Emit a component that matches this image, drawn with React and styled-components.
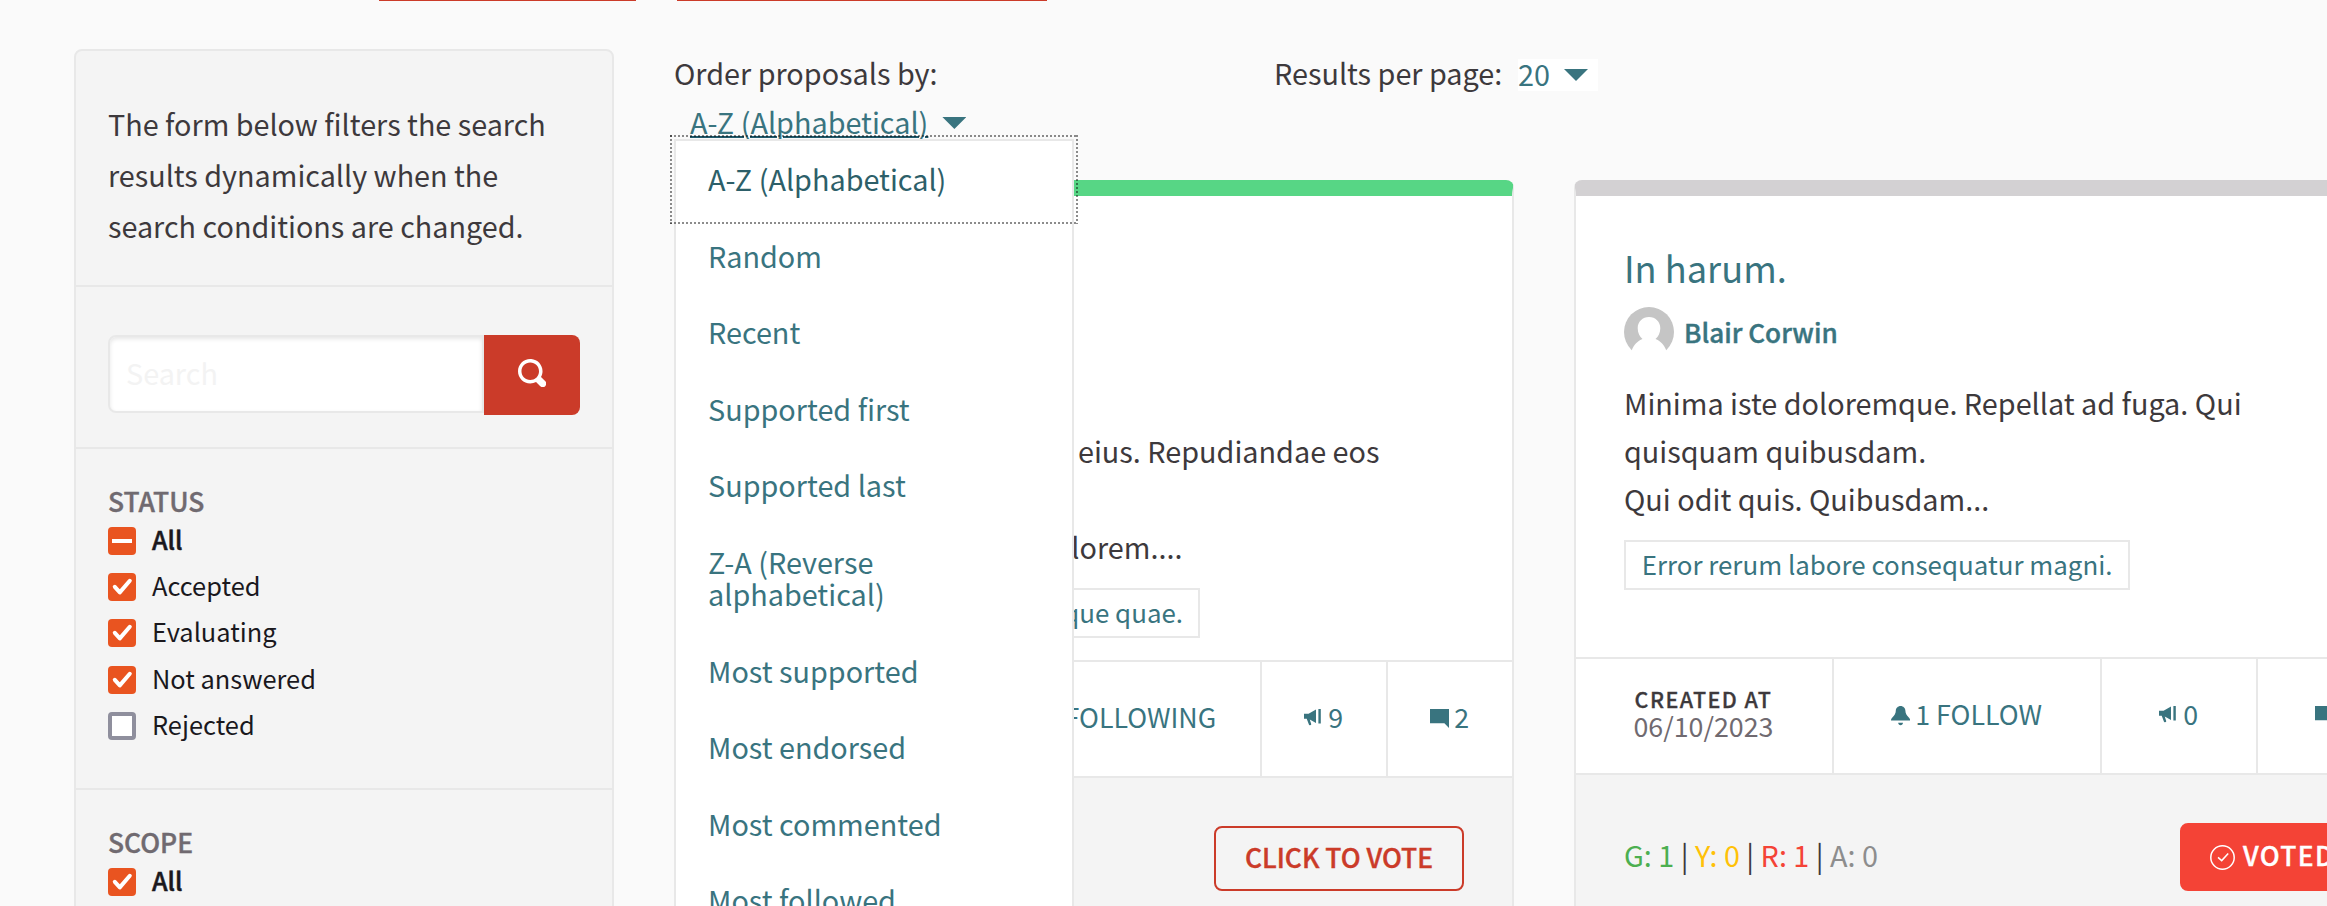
import React from 'react';
import styled, { createGlobalStyle } from 'styled-components';

const teal = '#39747f';
const line = '#e8e8e8';
const ink = '#3d393c';
const muted = '#706a70';
const red = '#cb3b29';
const orange = '#e95420';

const GlobalStyle = createGlobalStyle`
  *, *::before, *::after { box-sizing: border-box; }
  body {
    margin: 0;
    background: #fafafa;
    color: ${ink};
    font-family: "Noto Sans CJK JP", "Noto Sans", sans-serif;
    font-size: 28.8px;
    overflow: hidden;
  }
`;

const Page = styled.div`
  height: 906px;
  overflow: hidden;
`;

const TopActions = styled.div`
  display: flex;
  gap: 41px;
  height: 1px;
  padding-left: 379px;
`;

const TopActionEdge = styled.div`
  width: ${(p) => p.$width}px;
  background: ${red};
`;

const Columns = styled.main`
  display: grid;
  grid-template-columns: 540px 1740px;
  gap: 60px;
  padding: 48px 0 0 74px;
`;

/* ---------- filters ---------- */

const Sidebar = styled.aside`
  height: 900px;
  border: 2px solid ${line};
  border-radius: 8px;
  background: #f4f4f4;
`;

const FilterSection = styled.section`
  height: ${(p) => p.$height}px;
  padding: ${(p) => p.$top}px 32px 0;
  border-bottom: 2px solid ${line};
`;

const Intro = styled.p`
  margin: 0;
  font-size: 28.75px;
  line-height: 51.2px;
`;

const SearchForm = styled.div`
  display: flex;
  align-items: flex-start;
`;

const SearchInput = styled.input`
  width: 376px;
  height: 78px;
  padding: 0 16px 4px;
  border: 2px solid ${line};
  border-radius: 8px 0 0 8px;
  background: #fff;
  box-shadow: inset 0 2px 4px rgba(10, 10, 10, 0.1);
  color: ${ink};
  font: inherit;
  &::placeholder { color: #f3f3f3; opacity: 1; }
`;

const SearchButton = styled.button`
  display: flex;
  align-items: center;
  justify-content: center;
  width: 96px;
  height: 80px;
  padding: 0 0 4px;
  border: 0;
  border-radius: 0 8px 8px 0;
  background: ${red};
`;

const FilterTitle = styled.h3`
  margin: 0;
  color: ${muted};
  font-size: 26.4px;
  font-weight: 500;
  line-height: 34px;
  -webkit-text-stroke: 0.4px currentColor;
`;

const Option = styled.label`
  display: flex;
  align-items: center;
  gap: 16px;
  height: 46.2px;
  color: #1a181d;
  font-size: ${(p) => (p.$strong ? 25.1 : 25.4)}px;
  font-weight: ${(p) => (p.$strong ? 500 : 400)};
  -webkit-text-stroke: ${(p) => (p.$strong ? 0.5 : 0)}px currentColor;
`;

const OptionText = styled.span`
  line-height: 30px;
  padding-bottom: 4px;
`;

const Box = styled.span`
  display: flex;
  width: 28px;
  height: 28px;
  border: ${(p) => (p.$on ? '0' : '4px solid #8f8f9d')};
  border-radius: 4px;
  background: ${(p) => (p.$on ? orange : '#fff')};
`;

function Check({ state, strong, children }) {
  return (
    <Option $strong={strong}>
      <Box $on={state !== 'off'}>
        {state !== 'off' && (
          <svg width="28" height="28" viewBox="0 0 28 28" fill="none" stroke="#fff" strokeWidth="4">
            {state === 'mixed'
              ? <path d="M4 14h20" />
              : <path d="M6.8 13.8l5 5.6L21.8 7.8" strokeLinecap="round" strokeLinejoin="round" />}
          </svg>
        )}
      </Box>
      <OptionText>{children}</OptionText>
    </Option>
  );
}

/* ---------- controls ---------- */

const Controls = styled.div`
  display: grid;
  grid-template-columns: 600px 1fr;
  height: 131px;
  line-height: 48px;
`;

const OrderLine = styled.div`
  position: relative;
  display: flex;
  align-items: flex-start;
  padding-left: 16px;
`;

const OrderLink = styled.a`
  padding-top: 1px;
  color: ${teal};
  text-decoration: underline 2px #20596a;
  text-underline-offset: 2px;
`;

const Caret = styled.span`
  width: 24px;
  height: 12px;
  margin: ${(p) => p.$margin};
  background: ${teal};
  clip-path: polygon(0 0, 100% 0, 50% 100%);
`;

const PerPage = styled.div`
  display: flex;
  align-items: flex-start;
`;

const PerPageLabel = styled.span`
  width: 244px;
  white-space: nowrap;
`;

const PerPageValue = styled.span`
  display: flex;
  width: 80px;
  height: 32px;
  margin-top: 10px;
  background: #fff;
  color: ${teal};
  line-height: 30px;
`;

const Menu = styled.ul`
  position: absolute;
  z-index: 2;
  top: 42px;
  left: 0;
  width: 400px;
  margin: 0;
  padding: 0;
  border: 2px solid ${line};
  background: #fff;
  list-style: none;
`;

const MenuItem = styled.li`
  position: relative;
  padding: 22px 32px 22.6px;
  color: ${(p) => (p.$focused ? '#2d5f69' : teal)};
  line-height: 32px;
  white-space: pre-line;
`;

const dots = 'rgba(0, 0, 0, 0.45) 0 2px, transparent 2px 4px';
const FocusRing = styled.span`
  position: absolute;
  inset: -6px;
  background:
    repeating-linear-gradient(90deg, ${dots}) 0 0 / 100% 2px no-repeat,
    repeating-linear-gradient(90deg, ${dots}) 0 100% / 100% 2px no-repeat,
    repeating-linear-gradient(180deg, ${dots}) 0 0 / 2px 100% no-repeat,
    repeating-linear-gradient(180deg, ${dots}) 100% 0 / 2px 100% no-repeat;
`;

/* ---------- cards ---------- */

const Cards = styled.div`
  display: grid;
  grid-template-columns: 840px 840px;
  gap: 60px;
`;

const Card = styled.article`
  height: 900px;
  border: 2px solid ${line};
  border-top: 16px solid ${(p) => p.$accent};
  border-radius: 8px;
  background: #f4f4f4;
`;

const CardBody = styled.div`
  height: ${(p) => p.$height}px;
  padding: 47px 48px 0;
  background: #fff;
`;

const CardTitle = styled.h2`
  height: 48px;
  margin: 0;
  color: ${teal};
  font-size: 36.2px;
  font-weight: 400;
  line-height: 48px;
`;

const Author = styled.div`
  display: flex;
  gap: 10px;
  height: 50px;
  margin-top: 16px;
  color: ${teal};
  font-size: 26.1px;
  font-weight: 500;
  line-height: 50px;
  -webkit-text-stroke: 0.4px currentColor;
`;

const Description = styled.div`
  margin-top: 22px;
  line-height: 48px;
`;

const TextLine = styled.div`
  height: 48px;
  padding-left: ${(p) => p.$indent || 0}px;
  white-space: nowrap;
`;

const Tag = styled.span`
  display: inline-block;
  width: ${(p) => p.$width}px;
  height: 50px;
  margin-top: 17px;
  padding: 0 15px 0 14px;
  border: 2px solid ${line};
  color: ${teal};
  font-size: 25.9px;
  line-height: 44px;
  text-align: right;
  white-space: nowrap;
`;

const Stats = styled.div`
  display: grid;
  grid-template-columns: ${(p) => p.$columns};
  height: 118px;
  border: solid ${line};
  border-width: 2px 0;
  background: #fff;
`;

const Stat = styled.div`
  display: flex;
  flex-direction: ${(p) => (p.$stacked ? 'column' : 'row')};
  align-items: center;
  justify-content: center;
  gap: ${(p) => (p.$stacked ? 0 : 5)}px;
  padding: 0 1px 5px 0;
  color: ${(p) => (p.$stacked ? muted : teal)};
  font-size: 26.8px;
  line-height: 29px;
  white-space: nowrap;
  &:not(:last-child) { border-right: 2px solid ${line}; }
`;

const StatLabel = styled.span`
  color: ${ink};
  font-size: 21.5px;
  font-weight: 500;
  letter-spacing: 1.4px;
  line-height: 24px;
  -webkit-text-stroke: 0.3px currentColor;
`;

const StatIcon = styled.svg`
  width: 19.2px;
  height: 19.2px;
  margin-top: 5px;
  fill: currentColor;
`;

const VoteBar = styled.div`
  display: flex;
  align-items: center;
  justify-content: space-between;
  padding: 48px 48px 0;
`;

const Tally = styled.div`
  line-height: 30px;
  padding-bottom: 4px;
  white-space: pre;
`;

const Count = styled.span`
  color: ${(p) => p.$color};
`;

const VoteButton = styled.button`
  display: flex;
  align-items: center;
  justify-content: center;
  width: 250px;
  height: 65px;
  margin-left: auto;
  padding: 0 0 4px;
  border: 2px solid ${red};
  border-radius: 8px;
  background: transparent;
  color: ${red};
  font-family: inherit;
  font-size: 26.4px;
  font-weight: 500;
  white-space: nowrap;
  -webkit-text-stroke: 0.4px currentColor;
`;

const VotedButton = styled(VoteButton)`
  justify-content: flex-start;
  gap: 8px;
  width: 184px;
  height: 68px;
  padding: 0 0 0 28px;
  border-color: #f44336;
  background: #f44336;
  color: #fff;
  letter-spacing: 1.4px;
`;

const VotedText = styled.span`
  padding-bottom: 5px;
`;

const icons = {
  bell: 'M4 0c-1.1 0-2 .9-2 2 0 1.04-.52 1.98-1.34 2.66-.41.34-.66.82-.66 1.34h8c0-.52-.24-1-.66-1.34-.82-.68-1.34-1.62-1.34-2.66 0-1.1-.89-2-2-2zm-1 7c0 .55.45 1 1 1s1-.45 1-1h-2z',
  megaphone: 'M6 0h1v6h-1zM5 .2v5.6l-2.6-1.4.6 1.9c.05.2 0 .3-.15.35l-.35.12c-.2.07-.35 0-.42-.18l-.95-2.49h-1.13v-2.1h1.9z',
  comment: 'M.09 0c-.06 0-.09.04-.09.09v5.81c0 .05.04.09.09.09h5.91l2 2v-7.91c0-.06-.04-.09-.09-.09h-7.81z',
};

function Icon({ name }) {
  return <StatIcon viewBox="0 0 8 8"><path d={icons[name]} /></StatIcon>;
}

function Avatar() {
  return (
    <svg width="50" height="50" viewBox="0 0 50 50">
      <circle cx="25" cy="25" r="25" fill="#c5c5c5" />
      <path
        d="M25 10c6.4 0 11.3 4.7 11.3 11.2 0 4.6-2 8.4-4.8 10.8 4.8 1.8 8.6 5.9 10.9 11.5V50H7.6v-6.5C9.9 37.9 13.7 33.8 18.5 32c-2.800-2.400-4.800-6.200-4.800-10.800C13.700 14.700 18.600 10 25 10z"
        fill="#fff"
      />
    </svg>
  );
}

const orders = [
  'A-Z (Alphabetical)', 'Random', 'Recent', 'Supported first', 'Supported last',
  'Z-A (Reverse\nalphabetical)', 'Most supported', 'Most endorsed', 'Most commented', 'Most followed',
];

export default function App() {
  return (
    <Page>
      <GlobalStyle />
      <TopActions>
        <TopActionEdge $width={257} />
        <TopActionEdge $width={370} />
      </TopActions>
      <Columns>
        <Sidebar>
          <FilterSection $height={236} $top={47}>
            <Intro>The form below filters the search results dynamically when the search conditions are changed.</Intro>
          </FilterSection>
          <FilterSection $height={162} $top={48}>
            <SearchForm>
              <SearchInput placeholder="Search" />
              <SearchButton aria-label="Search">
                <svg width="28" height="28" viewBox="0 0 8 8" fill="#fff">
                  <path d="M3.5 0c-1.93 0-3.5 1.57-3.5 3.5s1.57 3.5 3.5 3.5c.59 0 1.17-.14 1.66-.41a1 1 0 0 0 .13.13l1 1a1.02 1.02 0 1 0 1.44-1.44l-1-1a1 1 0 0 0-.16-.13c.27-.49.44-1.06.44-1.66 0-1.93-1.55-3.5-3.5-3.5zm0 1c1.39 0 2.5 1.11 2.5 2.5 0 .66-.24 1.27-.66 1.72l-.03.03a1 1 0 0 0-.13.13c-.44.4-1.04.63-1.69.63-1.39 0-2.5-1.11-2.5-2.5s1.11-2.5 2.5-2.5z" />
                </svg>
              </SearchButton>
            </SearchForm>
          </FilterSection>
          <FilterSection $height={341} $top={35}>
            <FilterTitle>STATUS</FilterTitle>
            <Check state="mixed" strong>All</Check>
            <Check state="on">Accepted</Check>
            <Check state="on">Evaluating</Check>
            <Check state="on">Not answered</Check>
            <Check state="off">Rejected</Check>
          </FilterSection>
          <FilterSection $height={341} $top={35}>
            <FilterTitle>SCOPE</FilterTitle>
            <Check state="on" strong>All</Check>
          </FilterSection>
        </Sidebar>
        <div>
          <Controls>
            <div>
              <div>Order proposals by:</div>
              <OrderLine>
                <OrderLink>A-Z (Alphabetical)</OrderLink>
                <Caret $margin="20px 0 0 14px" />
                <Menu>
                  {orders.map((name, i) => (
                    <MenuItem key={name} $focused={i === 0}>
                      {name}
                      {i === 0 && <FocusRing />}
                    </MenuItem>
                  ))}
                </Menu>
              </OrderLine>
            </div>
            <PerPage>
              <PerPageLabel>Results per page:</PerPageLabel>
              <PerPageValue>
                20
                <Caret $margin="10px 10px 0 auto" />
              </PerPageValue>
            </PerPage>
          </Controls>
          <Cards>
            <Card $accent="#57d685">
              <CardBody $height={464}>
                <CardTitle />
                <Author />
                <Description>
                  <TextLine />
                  <TextLine $indent={354}>eius. Repudiandae eos</TextLine>
                  <TextLine />
                  <TextLine $indent={312}>dolorem....</TextLine>
                </Description>
                <Tag $width={476}>que quae.</Tag>
              </CardBody>
              <Stats $columns="248px 338px 126px 124px">
                <Stat />
                <Stat><Icon name="bell" />STOP FOLLOWING</Stat>
                <Stat><Icon name="megaphone" />9</Stat>
                <Stat><Icon name="comment" />2</Stat>
              </Stats>
              <VoteBar>
                <VoteButton>CLICK TO VOTE</VoteButton>
              </VoteBar>
            </Card>
            <Card $accent="#d3d1d3">
              <CardBody $height={461}>
                <CardTitle>In harum.</CardTitle>
                <Author><Avatar />Blair Corwin</Author>
                <Description>
                  <TextLine>Minima iste doloremque. Repellat ad fuga. Qui</TextLine>
                  <TextLine>quisquam quibusdam.</TextLine>
                  <TextLine>Qui odit quis. Quibusdam...</TextLine>
                </Description>
                <Tag $width={505.5}>Error rerum labore consequatur magni.</Tag>
              </CardBody>
              <Stats $columns="258px 268px 156px 154px">
                <Stat $stacked>
                  <StatLabel>CREATED AT</StatLabel>
                  06/10/2023
                </Stat>
                <Stat><Icon name="bell" />1 FOLLOW</Stat>
                <Stat><Icon name="megaphone" />0</Stat>
                <Stat><Icon name="comment" />0</Stat>
              </Stats>
              <VoteBar>
                <Tally>
                  <Count $color="#4caf50">G: 1</Count> | <Count $color="#ffc107">Y: 0</Count> | <Count $color="#f44336">R: 1</Count> | <Count $color="#8d8d8d">A: 0</Count>
                </Tally>
                <VotedButton>
                  <svg width="25" height="25" viewBox="0 0 25 25" fill="none" stroke="#fff" strokeWidth="1.5">
                    <circle cx="12.5" cy="12.5" r="11.7" />
                    <path d="M8 12.4l3.7 3.2 6.5-7.2" />
                  </svg>
                  <VotedText>VOTED</VotedText>
                </VotedButton>
              </VoteBar>
            </Card>
          </Cards>
        </div>
      </Columns>
    </Page>
  );
}
